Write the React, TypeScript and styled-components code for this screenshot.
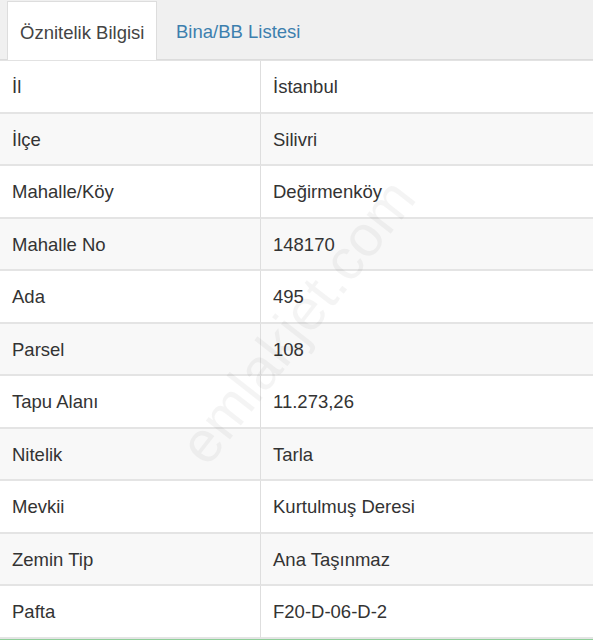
import React from "react";
import styled, { createGlobalStyle } from "styled-components";

const GlobalStyle = createGlobalStyle`
  html, body {
    margin: 0;
    padding: 0;
    background: #ffffff;
  }
  body {
    font-family: "Liberation Sans", Arial, sans-serif;
    color: #333333;
  }
`;

const Page = styled.div`
  position: relative;
  width: 593px;
  height: 640px;
  overflow: hidden;
  background: #ffffff;
`;

const TabBar = styled.div`
  display: flex;
  align-items: flex-end;
  height: 60px;
  padding-left: 7px;
  background: #f0f0f0;
  border-bottom: 1px solid #dcdcdc;
  box-sizing: border-box;
`;

const Tab = styled.div<{ $active?: boolean }>`
  height: ${(p) => (p.$active ? "59px" : "58px")};
  padding: 3px 0 0 ${(p) => (p.$active ? "12px" : "18px")};
  display: flex;
  align-items: center;
  box-sizing: border-box;
  font-size: 18.5px;
  white-space: nowrap;
  color: ${(p) => (p.$active ? "#444444" : "#3d7fae")};
  background: ${(p) => (p.$active ? "#ffffff" : "transparent")};
  border: 1px solid ${(p) => (p.$active ? "#dddddd" : "transparent")};
  border-bottom: none;
  margin-bottom: ${(p) => (p.$active ? "-1px" : "0")};
  width: ${(p) => (p.$active ? "150px" : "auto")};
`;

const Table = styled.div`
  display: grid;
  grid-template-columns: 260px 1fr;
  border-top: 1px solid #e2e2e2;
  border-bottom: 2px solid #8fcf9a;
`;

const Cell = styled.div<{ $striped: boolean; $value?: boolean }>`
  height: 52.5px;
  box-sizing: border-box;
  display: flex;
  align-items: center;
  padding-left: 12px;
  padding-top: 2px;
  font-size: 18.5px;
  color: #333333;
  background: ${(p) => (p.$striped ? "#f8f8f8" : "#ffffff")};
  border-bottom: 2px solid #e4e4e4;
  border-left: ${(p) => (p.$value ? "1px solid #dedede" : "none")};
`;

const Watermark = styled.div`
  position: absolute;
  left: 165px;
  top: 435px;
  font-size: 58px;
  font-family: "Liberation Sans", Arial, sans-serif;
  color: rgba(0, 0, 0, 0.045);
  transform: rotate(-52deg);
  transform-origin: left top;
  pointer-events: none;
  white-space: nowrap;
`;

const rows: [string, string][] = [
  ["İl", "İstanbul"],
  ["İlçe", "Silivri"],
  ["Mahalle/Köy", "Değirmenköy"],
  ["Mahalle No", "148170"],
  ["Ada", "495"],
  ["Parsel", "108"],
  ["Tapu Alanı", "11.273,26"],
  ["Nitelik", "Tarla"],
  ["Mevkii", "Kurtulmuş Deresi"],
  ["Zemin Tip", "Ana Taşınmaz"],
  ["Pafta", "F20-D-06-D-2"],
];

const App = () => {
  return (
    <Page>
      <GlobalStyle />
      <TabBar>
        <Tab $active>Öznitelik Bilgisi</Tab>
        <Tab>Bina/BB Listesi</Tab>
      </TabBar>
      <Table>
        {rows.map(([label, value], i) => (
          <React.Fragment key={label}>
            <Cell $striped={i % 2 === 1}>{label}</Cell>
            <Cell $striped={i % 2 === 1} $value>
              {value}
            </Cell>
          </React.Fragment>
        ))}
      </Table>
      <Watermark>emlakjet.com</Watermark>
    </Page>
  );
};

export default App;
